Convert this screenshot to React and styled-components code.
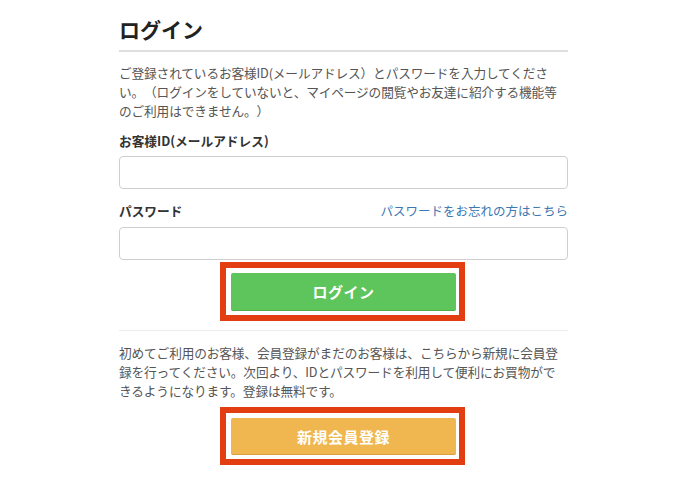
import React from "react";
import styled, { createGlobalStyle } from "styled-components";

const Global = createGlobalStyle`
  html, body { margin: 0; padding: 0; background: #fff; }
  body { font-family: "Noto Sans CJK JP", "Noto Sans", sans-serif; color: #555; }
  * { box-sizing: border-box; }
`;

const Page = styled.div`
  width: 690px;
  height: 485px;
  padding: 14px 0 0 119px;
`;

const Column = styled.div`
  width: 449px;
  display: flex;
  flex-direction: column;
`;

const Title = styled.h1`
  margin: 0;
  font-size: 21px;
  line-height: 30px;
  font-weight: 700;
  color: #222;
  padding-bottom: 6px;
  border-bottom: 2px solid #dedede;
`;

const Text = styled.p`
  margin: ${(p) => p.$mt || 0}px 0 0;
  font-size: 12.7px;
  line-height: 19px;
  color: #555;
  white-space: nowrap;
  letter-spacing: -0.15px;
  text-spacing-trim: space-all;
`;

const LabelRow = styled.div`
  display: flex;
  justify-content: space-between;
  align-items: center;
  margin-top: ${(p) => p.$mt}px;
  height: 19px;
`;

const Label = styled.label`
  font-size: 12.7px;
  font-weight: 700;
  color: #333;
`;

const Link = styled.a`
  font-size: 12.5px;
  color: #3c77b2;
  text-decoration: none;
`;

const Input = styled.input`
  margin-top: ${(p) => p.$mt}px;
  width: 100%;
  height: 33px;
  border: 1px solid #cfcfcf;
  border-radius: 4px;
  background: #fff;
  outline: none;
`;

const Highlight = styled.div`
  align-self: center;
  margin-top: ${(p) => p.$mt}px;
  margin-left: -2px;
  border: 6px solid #e33d12;
  padding: 5px 3px 4px 5px;
  background: #fff;
  display: flex;
`;

const Button = styled.button`
  width: 225px;
  height: ${(p) => p.$h}px;
  border: none;
  border-radius: 2px;
  background: ${(p) => p.$bg};
  border-bottom: 1px solid ${(p) => p.$edge};
  color: #fff;
  font-family: "Noto Sans CJK JP", sans-serif;
  font-size: 15px;
  font-weight: 700;
  letter-spacing: 0.5px;
  cursor: pointer;
`;

const Divider = styled.hr`
  margin: ${(p) => p.$mt}px 0 0;
  border: none;
  border-top: 1px solid #ececec;
  width: 100%;
`;

export default function App() {
  return (
    <>
      <Global />
      <Page>
        <Column>
          <Title>ログイン</Title>
          <Text $mt={11}>
            ご登録されているお客様ID(メールアドレス）とパスワードを入力してくださ
            <br />
            い。（ログインをしていないと、マイページの閲覧やお友達に紹介する機能等
            <br />
            のご利用はできません。）
          </Text>
          <LabelRow $mt={11}>
            <Label>お客様ID(メールアドレス)</Label>
          </LabelRow>
          <Input $mt={6} type="text" />
          <LabelRow $mt={12}>
            <Label>パスワード</Label>
            <Link href="#">パスワードをお忘れの方はこちら</Link>
          </LabelRow>
          <Input $mt={7} type="password" />
          <Highlight $mt={2}>
            <Button $h={38} $bg="#5ec55c" $edge="#4eae4c">ログイン</Button>
          </Highlight>
          <Divider $mt={9} />
          <Text $mt={12}>
            初めてご利用のお客様、会員登録がまだのお客様は、こちらから新規に会員登
            <br />
            録を行ってください。次回より、IDとパスワードを利用して便利にお買物がで
            <br />
            きるようになります。登録は無料です。
          </Text>
          <Highlight $mt={7}>
            <Button $h={37} $bg="#f0b650" $edge="#d9a040">新規会員登録</Button>
          </Highlight>
        </Column>
      </Page>
    </>
  );
}
